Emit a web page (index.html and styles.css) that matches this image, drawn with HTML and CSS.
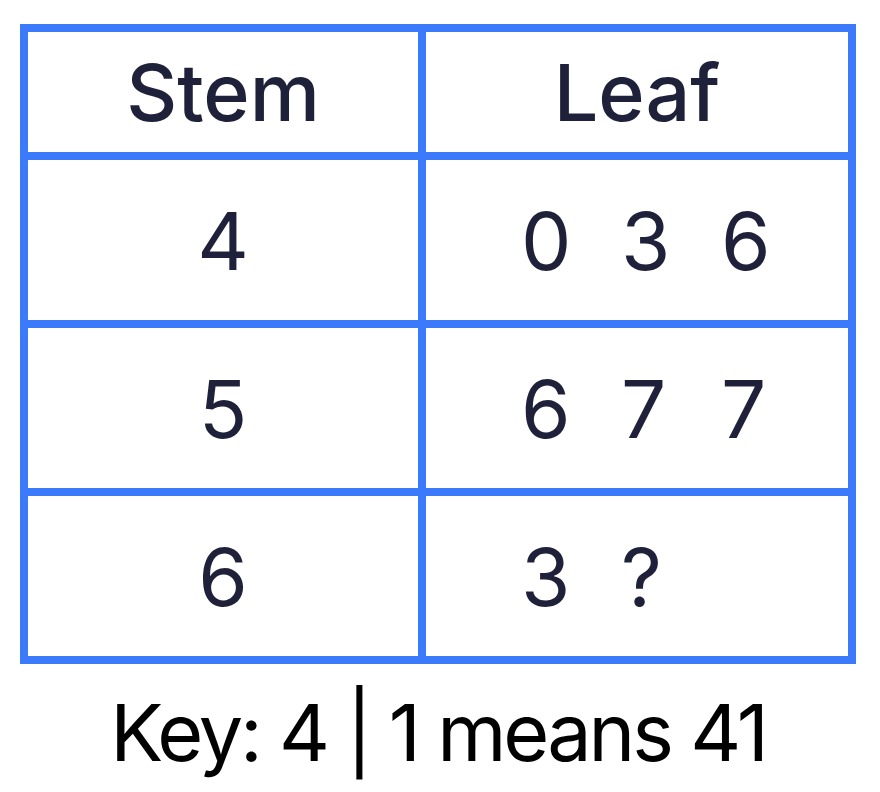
FILE: index.html
```html
<!DOCTYPE html>
<html>
<head>
<meta charset="utf-8">
<link rel="stylesheet" href="styles.css">
</head>
<body>
<div class="wrap">
  <table class="plot">
    <thead>
      <tr><th class="stem">Stem</th><th class="leaf">Leaf</th></tr>
    </thead>
    <tbody>
      <tr><td class="stem">4</td><td class="leaf"><span class="d">0</span><span class="d">3</span><span class="d">6</span></td></tr>
      <tr><td class="stem">5</td><td class="leaf"><span class="d">6</span><span class="d">7</span><span class="d">7</span></td></tr>
      <tr><td class="stem">6</td><td class="leaf"><span class="d">3</span><span class="d">?</span></td></tr>
    </tbody>
  </table>
  <div class="key">Key: 4 | 1 means 41</div>
</div>
</body>
</html>
```

FILE: styles.css
```css
html, body {
  margin: 0;
  padding: 0;
  background: #ffffff;
}
.wrap {
  padding: 24px 24px 0 20px;
  font-family: "Inter", "Noto Sans", sans-serif;
}
.plot {
  border-collapse: collapse;
  width: 836px;
  table-layout: fixed;
}
.plot th, .plot td {
  border: 8px solid #3b7bfb;
  padding: 0;
  color: #1e2139;
}
.plot th {
  height: 120px;
  font-size: 79px;
  font-weight: 500;
  text-align: center;
  letter-spacing: 0;
}
.plot td {
  height: 160px;
  font-size: 80px;
  font-weight: 400;
}
.plot .stem {
  width: 390px;
  text-align: center;
}
.plot td.leaf {
  text-align: left;
  padding-left: 95px;
}
.d {
  display: inline-block;
  width: 100px;
}
.key {
  margin-top: 20px;
  width: 836px;
  text-align: center;
  font-size: 79px;
  color: #000000;
  letter-spacing: -3px;
}
```
